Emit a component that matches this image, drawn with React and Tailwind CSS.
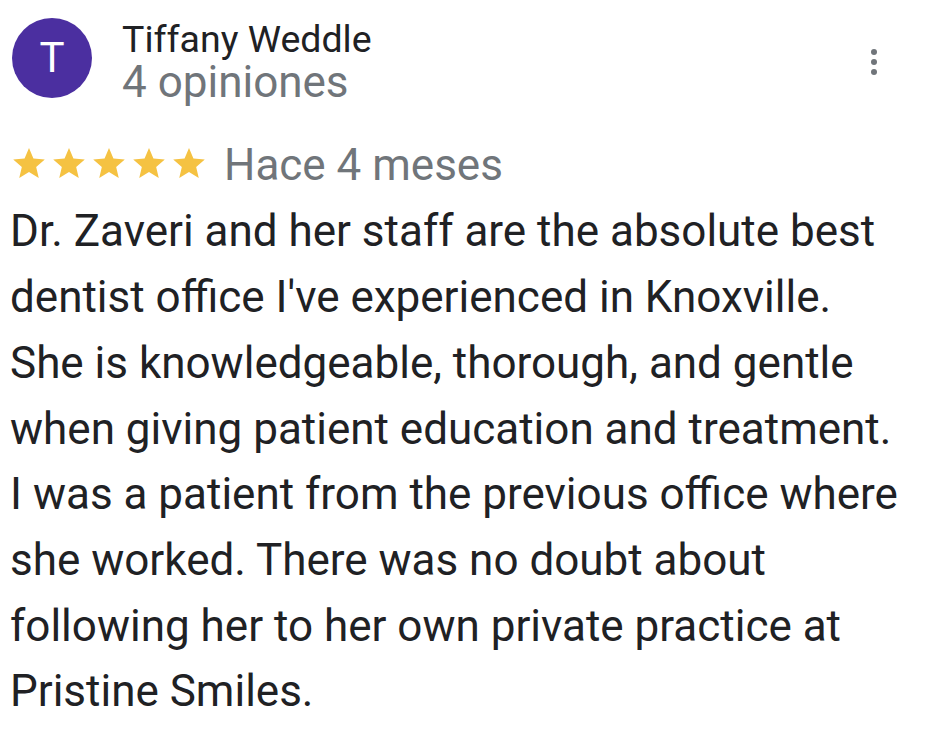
import React from 'react';

const Star = () => (
    <svg viewBox="2 2 20 19" className="w-[32px] h-[30px]" fill="#f5c242">
        <path d="M12 17.27L18.18 21l-1.64-7.03L22 9.24l-7.19-.61L12 2 9.19 8.63 2 9.24l5.46 4.73L5.82 21z" />
    </svg>
);

const lines = [
    'Dr. Zaveri and her staff are the absolute best',
    "dentist office I've experienced in Knoxville.",
    'She is knowledgeable, thorough, and gentle',
    'when giving patient education and treatment.',
    'I was a patient from the previous office where',
    'she worked. There was no doubt about',
    'following her to her own private practice at',
    'Pristine Smiles.'
];

const App = () => {
    return (
        <div className="w-[940px] h-[744px] bg-white pl-[10px] font-['Roboto',sans-serif] overflow-hidden">
            {/* header */}
            <div className="flex items-start pt-[18px] pr-[54px]">
                <div className="ml-[2px] w-[80px] h-[80px] rounded-full bg-[#4b2fa0] flex items-center justify-center shrink-0">
                    <span className="text-white text-[42px] leading-none">T</span>
                </div>
                <div className="ml-[30px] mt-[2.4px]">
                    <div className="text-[37.5px] leading-[39px] text-[#202124]">Tiffany Weddle</div>
                    <div className="text-[44px] leading-[46px] text-[#70757a]">4 opiniones</div>
                </div>
                <div className="ml-auto mt-[31px] w-[24px] flex flex-col items-center gap-[4px]">
                    <span className="w-[6px] h-[6px] rounded-full bg-[#70757a]"></span>
                    <span className="w-[6px] h-[6px] rounded-full bg-[#70757a]"></span>
                    <span className="w-[6px] h-[6px] rounded-full bg-[#70757a]"></span>
                </div>
            </div>

            {/* rating */}
            <div className="flex items-start mt-[34px] h-[52px]">
                <div className="flex gap-[8px] ml-[3px] mt-[9px]">
                    <Star />
                    <Star />
                    <Star />
                    <Star />
                    <Star />
                </div>
                <span className="ml-[19px] text-[44px] leading-[52px] text-[#70757a]">Hace 4 meses</span>
            </div>

            {/* review */}
            <p className="mt-[8px] text-[44px] leading-[65.7px] text-[#202124] whitespace-nowrap">
                {lines.map((l, i) => (
                    <span key={i} className="block">
                        {l}
                    </span>
                ))}
            </p>
        </div>
    );
};

export default App;
